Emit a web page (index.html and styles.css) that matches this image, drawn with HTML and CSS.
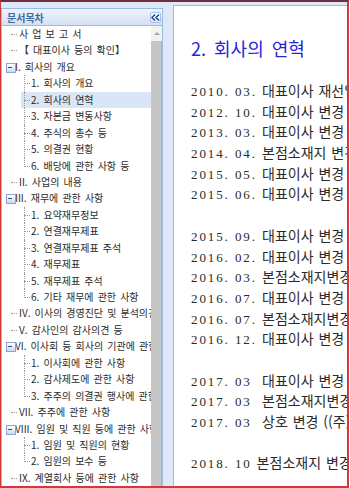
FILE: index.html
```html
<!DOCTYPE html>
<html lang="ko">
<head>
    <meta charset="UTF-8">
    <title>2. 회사의 연혁</title>
    <link rel="stylesheet" href="styles.css">
</head>
<body>
    <div class="frame">
        <!-- Table of contents -->
        <div class="toc-panel">
            <div class="toc-header">
                <span class="toc-title">문서목차</span>
                <span class="tool">
                    <svg width="9" height="7" viewBox="0 0 9 7"><path d="M4 0.5 L1 3.5 L4 6.5 M8 0.5 L5 3.5 L8 6.5" fill="none" stroke="#15428b" stroke-width="1.4"/></svg>
                </span>
            </div>
            <div class="toc-body">
                <ul class="tree">
                    <li class="node">사 업 보 고 서</li>
                    <li class="node">【 대표이사 등의 확인】</li>
                    <li class="node open">I. 회사의 개요</li>
                    <li class="node child">1. 회사의 개요</li>
                    <li class="node child sel">2. 회사의 연혁</li>
                    <li class="node child">3. 자본금 변동사항</li>
                    <li class="node child">4. 주식의 총수 등</li>
                    <li class="node child">5. 의결권 현황</li>
                    <li class="node child last">6. 배당에 관한 사항 등</li>
                    <li class="node">II. 사업의 내용</li>
                    <li class="node open">III. 재무에 관한 사항</li>
                    <li class="node child">1. 요약재무정보</li>
                    <li class="node child">2. 연결재무제표</li>
                    <li class="node child">3. 연결재무제표 주석</li>
                    <li class="node child">4. 재무제표</li>
                    <li class="node child">5. 재무제표 주석</li>
                    <li class="node child last">6. 기타 재무에 관한 사항</li>
                    <li class="node">IV. 이사의 경영진단 및 분석의견</li>
                    <li class="node">V. 감사인의 감사의견 등</li>
                    <li class="node open">VI. 이사회 등 회사의 기관에 관한 사항</li>
                    <li class="node child">1. 이사회에 관한 사항</li>
                    <li class="node child">2. 감사제도에 관한 사항</li>
                    <li class="node child last">3. 주주의 의결권 행사에 관한 사항</li>
                    <li class="node">VII. 주주에 관한 사항</li>
                    <li class="node open">VIII. 임원 및 직원 등에 관한 사항</li>
                    <li class="node child">1. 임원 및 직원의 현황</li>
                    <li class="node child last">2. 임원의 보수 등</li>
                    <li class="node">IX. 계열회사 등에 관한 사항</li>
                </ul>
                <div class="scrollbar">
                    <div class="scroll-up"></div>
                    <div class="scroll-thumb"></div>
                </div>
            </div>
        </div>

        <div class="splitter"></div>

        <!-- Document content -->
        <div class="content">
            <h2 class="doc-title">2. 회사의 연혁</h2>
            <div class="row"><span class="date">2010. 03.</span>대표이사 재선임</div>
            <div class="row"><span class="date">2012. 10.</span>대표이사 변경</div>
            <div class="row"><span class="date">2013. 03.</span>대표이사 변경</div>
            <div class="row"><span class="date">2014. 04.</span>본점소재지 변경</div>
            <div class="row"><span class="date">2015. 05.</span>대표이사 변경</div>
            <div class="row"><span class="date">2015. 06.</span>대표이사 변경</div>
            <div class="row"></div>
            <div class="row"><span class="date">2015. 09.</span>대표이사 변경</div>
            <div class="row"><span class="date">2016. 02.</span>대표이사 변경</div>
            <div class="row"><span class="date">2016. 03.</span>본점소재지변경</div>
            <div class="row"><span class="date">2016. 07.</span>대표이사 변경</div>
            <div class="row"><span class="date">2016. 07.</span>본점소재지변경</div>
            <div class="row"><span class="date">2016. 12.</span>대표이사 변경</div>
            <div class="row"></div>
            <div class="row"><span class="date">2017. 03</span>대표이사 변경</div>
            <div class="row"><span class="date">2017. 03</span>본점소재지변경</div>
            <div class="row"><span class="date">2017. 03</span>상호 변경 ((주)</div>
            <div class="row"></div>
            <div class="row"><span class="date free">2018. 10</span> 본점소재지 변경</div>
        </div>
    </div>
</body>
</html>
```

FILE: styles.css
```css
/* General Reset */
* {
    margin: 0;
    padding: 0;
    box-sizing: border-box;
}

body {
    width: 350px;
    height: 488px;
    overflow: hidden;
    background-color: #fff;
    font-family: "Noto Sans CJK KR", sans-serif;
}

/* Outer window */
.frame {
    display: flex;
    width: 349px;
    height: 488px;
    border-top: 2px solid #6e3040;
    border-left: 1px solid #d23a3a;
    border-right: 2px solid #d23a3a;
    border-bottom: 2px solid #d23a3a;
    background-color: #dfe8f6;
}

/* Left panel */
.toc-panel {
    display: flex;
    flex-direction: column;
    width: 162px;
    margin-top: 6px;
    border: 1px solid #99bbe8;
    border-bottom: none;
    background-color: #fff;
}

.toc-header {
    display: flex;
    align-items: center;
    justify-content: space-between;
    height: 17px;
    padding: 0 1px 0 5px;
    background: linear-gradient(#eef3fa, #d3e1f2);
    border-bottom: 1px solid #99bbe8;
}

.toc-title {
    font-size: 10px;
    font-weight: bold;
    color: #3f68a3;
}

.tool {
    display: flex;
    align-items: center;
    justify-content: center;
    width: 11px;
    height: 11px;
    background: linear-gradient(#fbfdff, #dce7f6);
    border: 1px solid #a9c3e6;
    border-radius: 2px;
}

.toc-body {
    display: flex;
    flex: 1;
    overflow: hidden;
}

/* Tree */
.tree {
    flex: 1;
    list-style: none;
    overflow: hidden;
    font-size: 10px;
    word-spacing: 1.3px;
    color: #2b2b2b;
}

.node {
    position: relative;
    height: 16.45px;
    line-height: 16.45px;
    padding-left: 17px;
    white-space: nowrap;
}

.node::before {
    content: "";
    position: absolute;
    left: 9px;
    top: 8px;
    width: 6px;
    border-top: 1px dotted #9a9a9a;
}

.node.open {
    padding-left: 13px;
}

.node.open::before {
    left: 4px;
    top: 4px;
    width: 8px;
    height: 8px;
    border: 1px solid #8aa6c8;
    background: linear-gradient(#ffffff, #c9d9ef);
}

.node.open::after {
    content: "";
    position: absolute;
    left: 6px;
    top: 8px;
    width: 4px;
    border-top: 1px solid #2c4f86;
}

.node.child {
    padding-left: 29px;
}

.node.child::before {
    left: 22px;
}

.node.child::after {
    content: "";
    position: absolute;
    left: 22px;
    top: 0;
    height: 100%;
    border-left: 1px dotted #9a9a9a;
}

.node.child.last::after {
    height: 9px;
}

.node.sel {
    background: linear-gradient(to right, transparent 19px, #dae6f6 19px);
}

/* Fake scrollbar */
.scrollbar {
    display: flex;
    flex-direction: column;
    width: 11px;
    background-color: #f2f2f2;
}

.scroll-up {
    height: 15px;
    display: flex;
    justify-content: center;
    align-items: center;
}

.scroll-up::before {
    content: "";
    border-left: 3px solid transparent;
    border-right: 3px solid transparent;
    border-bottom: 3px solid #a8a8a8;
}

.scroll-thumb {
    flex: 1;
    background-color: #c6c6c6;
    border-right: 1px solid #b4b4b4;
}

/* Splitter */
.splitter {
    width: 10px;
    background-color: #dfe8f6;
}

/* Content */
.content {
    flex: 1;
    margin-top: 3px;
    padding-left: 17px;
    background-color: #fff;
    border-left: 1px solid #99bbe8;
    border-top: 1px solid #99bbe8;
    overflow: hidden;
    white-space: nowrap;
    font-size: 14px;
    word-spacing: 1px;
    color: #2a2a2a;
}

.doc-title {
    margin: 32px 0 22px;
    font-size: 18px;
    font-weight: normal;
    line-height: 20px;
    color: #2424dc;
    word-spacing: 3px;
}

.row {
    height: 20.7px;
    line-height: 20.7px;
}

.date {
    display: inline-block;
    width: 71px;
    font-family: "Liberation Serif", serif;
    font-size: 13px;
    letter-spacing: 1.9px;
    word-spacing: 0;
}

.date.free {
    width: auto;
}
```
